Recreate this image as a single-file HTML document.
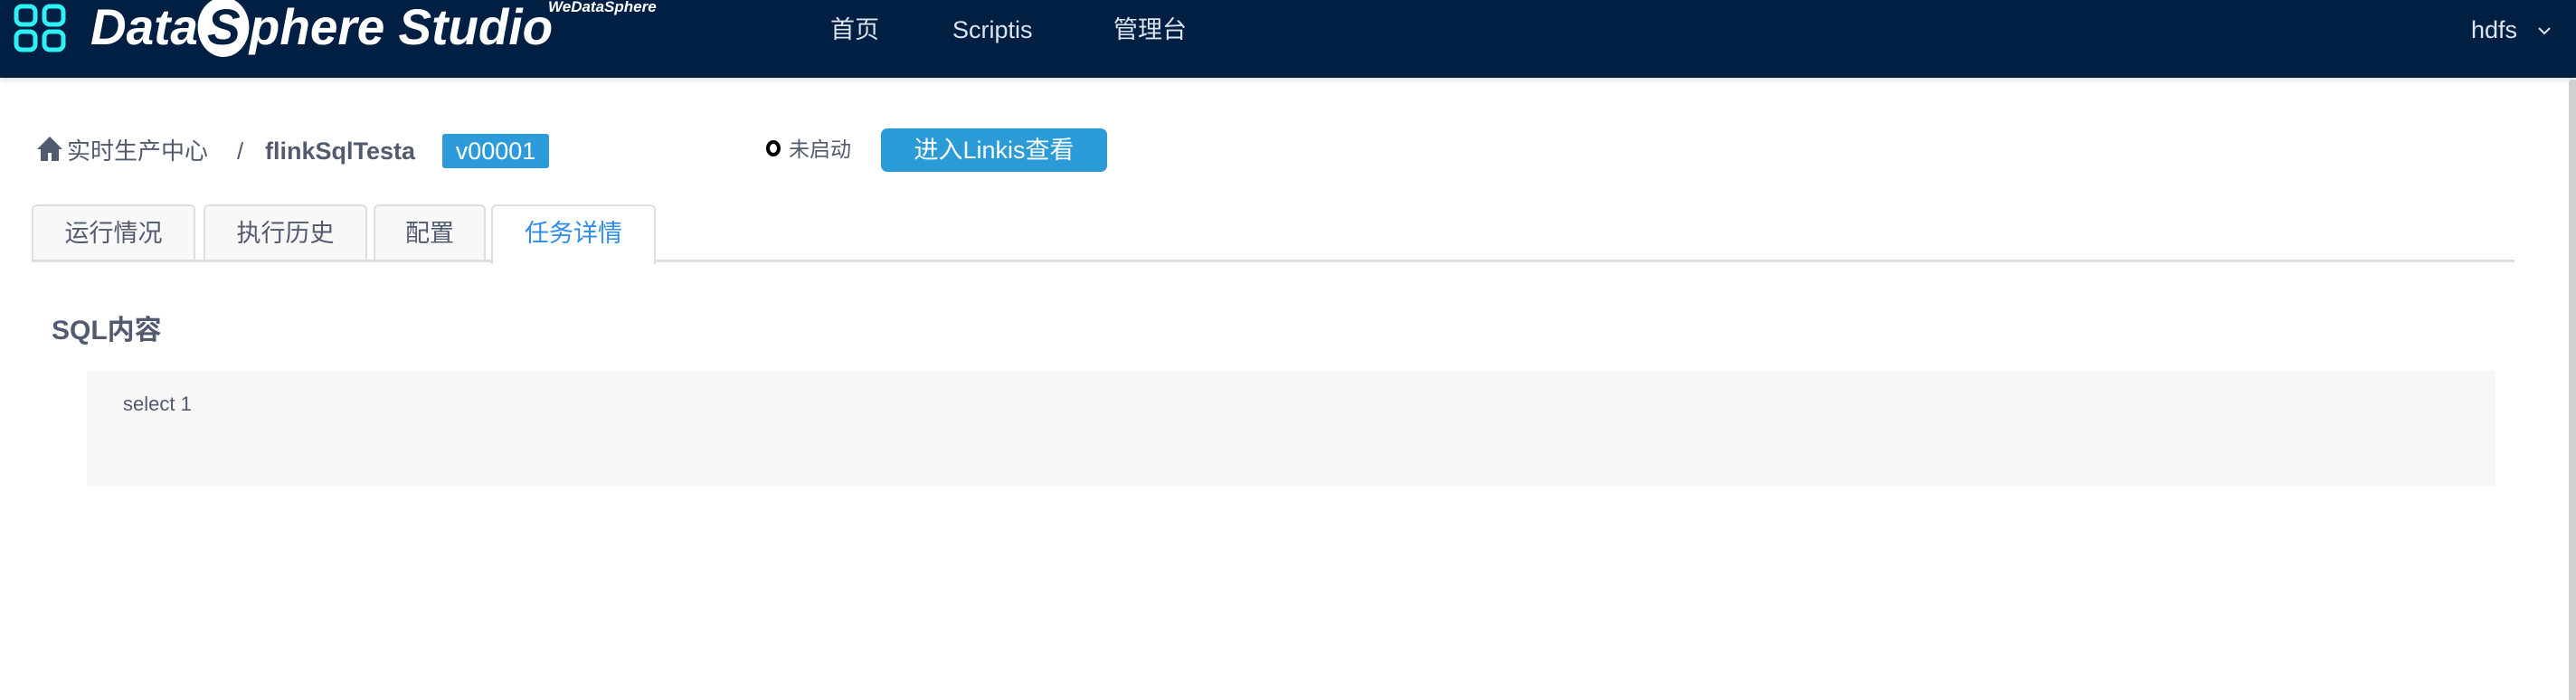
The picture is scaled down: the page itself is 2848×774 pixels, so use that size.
<!DOCTYPE html>
<html><head><meta charset="utf-8"><style>
*{margin:0;padding:0;box-sizing:border-box}
body{width:2848px;height:774px;background:#fff;font-family:"Liberation Sans","Noto Sans CJK SC",sans-serif;position:relative;overflow:hidden;color:#515a6e}
.hdr{position:absolute;left:0;top:0;width:2848px;height:86px;background:#001f42;box-shadow:0 2px 6px rgba(0,0,0,.15)}
.a{position:absolute;white-space:nowrap;line-height:40px}
.nav{color:#dce3ec;font-size:27px;top:13px}
.sb{position:absolute;left:2840px;top:88px;width:8px;height:686px;background:#d0d0d0;border-radius:4px 0 0 0}
.tab{position:absolute;top:226px;height:63px;border:2px solid #dcdee2;border-bottom:none;border-radius:6px 6px 0 0;background:#f8f8f9;font-size:27px;line-height:60px;text-align:center;color:#515a6e}
</style></head><body>
<div class="hdr">
<svg class="a" style="left:15px;top:4px" width="58" height="54" viewBox="0 0 58 54"><g fill="none" stroke="#2ef0f5" stroke-width="5"><rect x="3" y="3" width="21" height="20" rx="6"/><rect x="34" y="3" width="21" height="20" rx="6"/><rect x="3" y="31" width="21" height="20" rx="6"/><rect x="34" y="31" width="21" height="20" rx="6"/></g></svg>
<div class="a" style="left:100px;top:0px;font-size:56px;line-height:60px;font-weight:bold;font-style:italic;color:#fff;transform:scaleX(0.98);transform-origin:0 0">Data<span style="display:inline-block;background:#fff;color:#001f42;border-radius:50%;width:58px;height:66px;text-align:center;line-height:66px;vertical-align:top;margin-top:-3px">S</span>phere Studio</div>
<div class="a" style="left:606px;top:-12px;font-size:17px;font-weight:bold;font-style:italic;color:#fff">WeDataSphere</div>
<div class="a nav" style="left:918px">首页</div>
<div class="a nav" style="left:1053px">Scriptis</div>
<div class="a nav" style="left:1231px">管理台</div>
<div class="a nav" style="left:2732px">hdfs</div>
<svg class="a" style="left:2805px;top:28px" width="16" height="12" viewBox="0 0 16 12"><path d="M2 3l6 6 6-6" fill="none" stroke="#dce3ec" stroke-width="2"/></svg>
</div>
<div class="sb"></div>
<svg class="a" style="left:40px;top:149px" width="30" height="30" viewBox="0 0 30 30"><path d="M15 2L1 16h4v13h8v-9h4v9h8V16h4z" fill="#515a6e"/></svg>
<div class="a" style="left:74px;top:147px;font-size:26px;color:#515a6e">实时生产中心</div>
<div class="a" style="left:262px;top:147px;font-size:26px;color:#515a6e">/</div>
<div class="a" style="left:293px;top:147px;font-size:27px;font-weight:bold;color:#515a6e">flinkSqlTesta</div>
<div class="a" style="left:489px;top:148px;width:118px;height:38px;background:#2d9bd9;border-radius:3px;color:#fff;font-size:27px;line-height:38px;text-align:center">v00001</div>
<div class="a" style="left:847px;top:155px;width:16px;height:18px;border:4px solid #000;border-radius:50%"></div>
<div class="a" style="left:872px;top:145px;font-size:23px;color:#515a6e">未启动</div>
<div class="a" style="left:974px;top:142px;width:250px;height:48px;background:#2b9bd8;border-radius:7px;color:#fff;font-size:27px;line-height:48px;text-align:center">进入Linkis查看</div>
<div class="tab" style="left:35px;width:181px">运行情况</div>
<div class="tab" style="left:225px;width:181px">执行历史</div>
<div class="tab" style="left:413px;width:124px">配置</div>
<div class="a" style="left:35px;top:287px;width:2745px;height:3px;background:#dcdee2"></div>
<div class="tab" style="left:543px;width:182px;height:66px;background:#fff;color:#2d8cf0">任务详情</div>
<div class="a" style="left:57px;top:346px;font-size:30px;font-weight:bold;color:#515a6e">SQL内容</div>
<div class="a" style="left:96px;top:410px;width:2663px;height:127px;background:#f7f7f7"></div>
<div class="a" style="left:136px;top:427px;font-size:22px;color:#515a6e">select 1</div>
</body></html>
